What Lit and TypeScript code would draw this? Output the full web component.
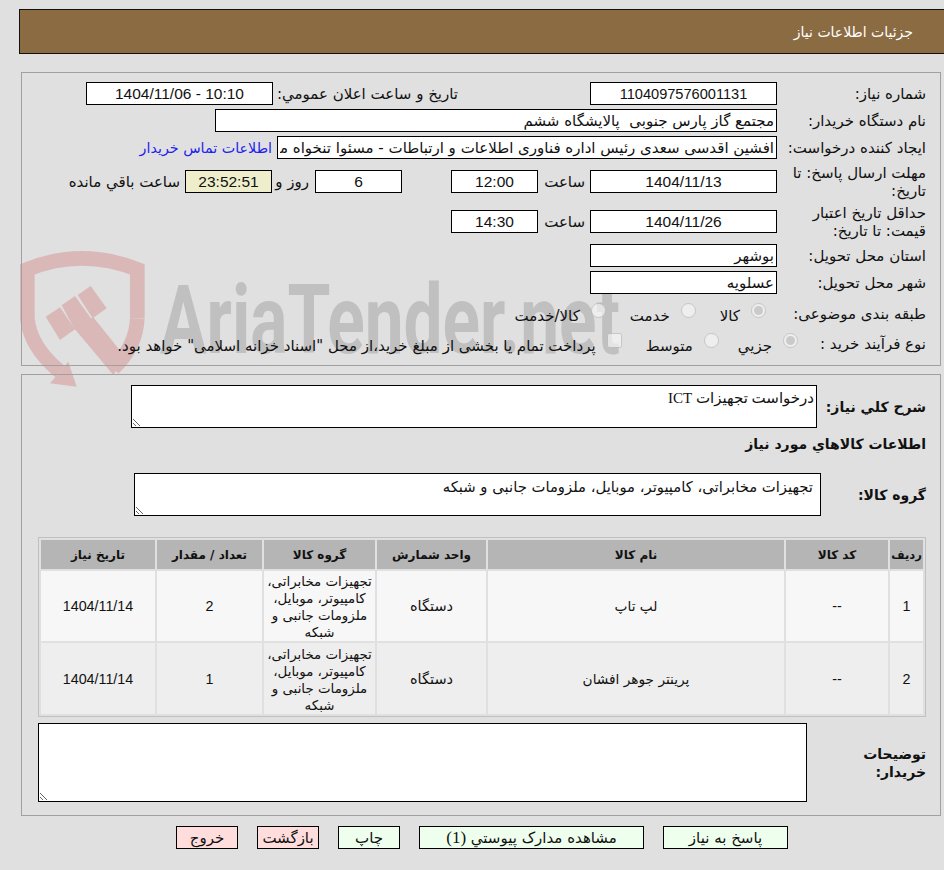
import { LitElement, html, css, svg } from "lit";
import { customElement } from "lit/decorators.js";

const GROUP = "تجهیزات مخابراتی، کامپیوتر، موبایل، ملزومات جانبی و شبکه";

@customElement("app-root")
export class AppRoot extends LitElement {
  static styles = css`
    :host {
      display: block;
      position: relative;
      min-height: 870px;
      overflow: hidden;
      background: #e0e0e0;
      color: #111;
      direction: rtl;
      font-family: "DejaVu Sans", "Noto Sans", sans-serif;
      font-size: 15px;
    }
    .watermark { position: absolute; left: 0; top: 0; width: 944px; height: 870px; }
    .page { position: relative; padding-top: 9px; }
    .header {
      height: 43px;
      margin-left: 19px;
      border: 1px solid #111;
      border-right: none;
      background: #8b6b42;
      color: #fff;
      display: flex;
      align-items: center;
      padding-right: 31px;
      font-size: 14px;
    }
    .panel { margin-left: 21px; margin-right: 3px; border: 1px solid #a0a0a0; }
    .p1 { margin-top: 18px; height: 283px; padding-top: 9px; }
    .p2 { margin-top: 8px; padding-top: 10px; height: 430px; }
    .row { display: flex; align-items: center; height: 23px; margin-top: 4px; }
    .row:first-child { margin-top: 0; }
    .mt11 { margin-top: 11px; }
    .mt17 { margin-top: 17px; }
    .mt8 { margin-top: 8px; }
    .mt7 { margin-top: 7px; }
    .label { width: 144px; margin-left: 5px; margin-right: 14px; flex: none; line-height: 18px; }
    .label.short { width: 128px; margin-left: 0; }
    input.f {
      box-sizing: border-box;
      height: 23px;
      border: 1px solid #000;
      background: #fff;
      color: #111;
      font: inherit;
      padding: 0 2px;
      margin: 0;
      outline: none;
      border-radius: 0;
      flex: none;
    }
    input.c { text-align: center; font-family: "Liberation Sans", sans-serif; font-size: 15.5px; }
    input.id { font-size: 14.6px; }
    input.cd { background: #eeeecc; }
    .w187 { width: 187px; }
    .w87 { width: 87px; }
    .wl { width: 562px; }
    .wc { width: 500px; }
    .t { flex: none; white-space: nowrap; }
    .ml5, input.f.ml5 { margin-right: 5px; }
    .saat { width: 42px; }
    .pub { margin-right: 132px; width: 180px; }
    input.f.six { margin-right: 49px; }
    .rooz { width: 27px; margin-right: 6px; }
    input.f.ml10 { margin-right: 10px; }
    .link { margin-right: 5px; color: #2222ee; text-decoration: none; flex: none; white-space: nowrap; font-size: 14.3px; }
    .radios { display: flex; align-items: center; padding-right: 11px; }
    .radios.r9 { padding-right: 0; }
    .opt { display: flex; align-items: center; gap: 11px; margin-left: 24px; }
    .opt.tight { margin-left: 19px; }
    .opt input { width: 15px; height: 15px; margin: 0; position: relative; top: -3px; }
    .opt span { white-space: nowrap; position: relative; top: 2px; }
    .b { font-weight: 700; font-size: 14px; }
    .sec { display: flex; align-items: center; }
    .ta {
      box-sizing: border-box;
      border: 1px solid #000;
      background: #fff;
      color: #111;
      font: inherit;
      direction: rtl;
      padding: 3px 2px 2px;
      margin: 0;
      outline: none;
      border-radius: 0;
      display: block;
      flex: none;
    }
    .l1 { width: 109px; padding-right: 14px; flex: none; }
    .l1.a { width: 105px; }
    .l1.c { width: 65px; margin-left: 54px; line-height: 18px; }
    .ta1 { width: 686px; height: 43px; font-family: "Liberation Serif", "DejaVu Sans", serif; }
    .ta2 { width: 687px; height: 43px; padding-right: 7px; padding-top: 4px; font-size: 14.8px; }
    .ta3 { width: 769px; height: 79px; }
    .h2 { padding-right: 14px; margin-top: 6px; height: 20px; line-height: 20px; }
    .s2 { margin-top: 19px; }
    table {
      table-layout: fixed;
      width: 888px;
      margin: 21px 14px 6px 0;
      border: 1px solid #c0c0c0;
      border-spacing: 2px;
      border-collapse: separate;
      text-align: center;
    }
    .c33 { width: 33px; }
    .c102 { width: 102px; }
    .c296 { width: 296px; }
    .c109 { width: 109px; }
    .c111 { width: 111px; }
    .c105 { width: 105px; }
    .c114 { width: 114px; }
    th { background: #b5b5b5; height: 29px; padding: 0; font-size: 12px; font-weight: 700; white-space: nowrap; }
    th.first { font-size: 11.5px; }
    td { box-sizing: border-box; padding: 2px 0 0; line-height: 17.3px; font-size: 14.5px; }
    td.n { font-family: "Liberation Sans", sans-serif; font-size: 14.3px; }
    td.m { font-size: 13.7px; }
    td.g { font-size: 13.4px; padding-top: 2px; line-height: 17px; }
    tr.o td { background: #f7f7f7; height: 70px; }
    tr.e td { background: #eeeeee; height: 71px; }
    .bar { display: flex; justify-content: center; gap: 19px; margin: 10px 0 0 20px; }
    button {
      box-sizing: border-box;
      height: 23px;
      border: 1px solid #000;
      background: #eeffee;
      color: #111;
      font: inherit;
      padding: 0;
      border-radius: 0;
      white-space: nowrap;
    }
    button.red { background: #ffdddd; }
    .ser { font-family: "Liberation Serif", serif; font-size: 17px; }
    .w125 { width: 125px; }
    .w225 { width: 225px; }
    .w62 { width: 62px; }
  `;

  private logo() {
    return svg`
      <g transform="translate(10 240) scale(.3333)">
        <g fill="none" stroke="#dab8b8" stroke-width="44">
          <path d="M382 235 L382 88 Q215 22 52 88 L52 235 Q60 320 150 395" />
          <path d="M382 235 Q378 320 310 385" />
        </g>
        <g fill="#dab8b8">
          <path d="M175 365 L200 440 L120 430 Z" />
          <path d="M190 262 L250 232 L345 350 L310 405 Z" />
          <path d="M107 230 L150 202 L195 268 L150 300 Z" />
          <path d="M155 196 L195 168 L245 238 L195 270 Z" />
          <path d="M203 165 L242 138 L290 205 L248 235 Z" />
        </g>
      </g>
      <text x="160" y="353" font-family="Roboto, sans-serif" font-weight="700" font-size="96"
        fill="#c0c0c0" textLength="460" lengthAdjust="spacingAndGlyphs" direction="ltr">AriaTender.net</text>
    `;
  }

  private item(n: number, unit: string, name: string, qty: number, date: string, cls: string) {
    return html`<tr class=${cls}>
      <td class="n">${n}</td><td class="n">--</td><td class="m">${name}</td><td>${unit}</td><td class="g">${GROUP}</td><td class="n">${qty}</td><td class="n">${date}</td>
    </tr>`;
  }

  render() {
    return html`
      <svg class="watermark" viewBox="0 0 944 870">${this.logo()}</svg>
      <div class="page">
        <div class="header">جزئیات اطلاعات نیاز</div>

        <div class="panel p1">
          <div class="row">
            <span class="label">شماره نیاز:</span>
            <input class="f c id w187" readonly .value=${"1104097576001131"} />
            <span class="t pub">تاریخ و ساعت اعلان عمومي:</span>
            <input class="f c w187 ml5" readonly .value=${"10:10 - 1404/11/06"} />
          </div>
          <div class="row">
            <span class="label">نام دستگاه خریدار:</span>
            <input class="f wl" readonly .value=${"مجتمع گاز پارس جنوبی  پالایشگاه ششم"} />
          </div>
          <div class="row">
            <span class="label">ایجاد کننده درخواست:</span>
            <input class="f wc" readonly .value=${"افشین اقدسی سعدی رئیس اداره فناوری اطلاعات و ارتباطات - مسئوا تنخواه مجتمع"} />
            <a class="link" href="#">اطلاعات تماس خریدار</a>
          </div>
          <div class="row mt11">
            <span class="label">مهلت ارسال پاسخ: تا تاریخ:</span>
            <input class="f c w187" readonly .value=${"1404/11/13"} />
            <span class="t ml5 saat">ساعت</span>
            <input class="f c w87 ml5" readonly .value=${"12:00"} />
            <input class="f c w87 six" readonly .value=${"6"} />
            <span class="t rooz">روز و</span>
            <input class="f c w87 cd ml10" readonly .value=${"23:52:51"} />
            <span class="t ml5">ساعت باقي مانده</span>
          </div>
          <div class="row mt17">
            <span class="label">حداقل تاریخ اعتبار قیمت: تا تاریخ:</span>
            <input class="f c w187" readonly .value=${"1404/11/26"} />
            <span class="t ml5 saat">ساعت</span>
            <input class="f c w87 ml5" readonly .value=${"14:30"} />
          </div>
          <div class="row mt11">
            <span class="label">استان محل تحویل:</span>
            <input class="f w187" readonly .value=${"بوشهر"} />
          </div>
          <div class="row">
            <span class="label">شهر محل تحویل:</span>
            <input class="f w187" readonly .value=${"عسلویه"} />
          </div>
          <div class="row mt8">
            <span class="label">طبقه بندی موضوعی:</span>
            <div class="radios">
              <label class="opt"><input type="radio" disabled checked /><span>کالا</span></label>
              <label class="opt"><input type="radio" disabled /><span>خدمت</span></label>
              <label class="opt"><input type="radio" disabled /><span>کالا/خدمت</span></label>
            </div>
          </div>
          <div class="row mt7">
            <span class="label short">نوع فرآیند خرید :</span>
            <div class="radios r9">
              <label class="opt tight"><input type="radio" disabled checked /><span>جزيي</span></label>
              <label class="opt"><input type="radio" disabled /><span>متوسط</span></label>
              <label class="opt"><input type="checkbox" disabled /><span>پرداخت تمام یا بخشی از مبلغ خرید،از محل "اسناد خزانه اسلامی" خواهد بود.</span></label>
            </div>
          </div>
        </div>

        <div class="panel p2">
          <div class="sec">
            <span class="l1 b">شرح کلي نیاز:</span>
            <textarea class="ta ta1" readonly .value=${"درخواست تجهیزات ICT"}></textarea>
          </div>
          <div class="h2 b">اطلاعات کالاهاي مورد نیاز</div>
          <div class="sec s2">
            <span class="l1 a b">گروه کالا:</span>
            <textarea class="ta ta2" readonly .value=${GROUP}></textarea>
          </div>
          <table>
            <colgroup>
              <col class="c33" /><col class="c102" /><col class="c296" />
              <col class="c109" /><col class="c111" /><col class="c105" /><col class="c114" />
            </colgroup>
            <thead>
              <tr>
                <th class="first">ردیف</th><th>کد کالا</th><th>نام کالا</th><th>واحد شمارش</th><th>گروه کالا</th><th>تعداد / مقدار</th><th>تاریخ نیاز</th>
              </tr>
            </thead>
            <tbody>
              ${this.item(1, "دستگاه", "لپ تاپ", 2, "1404/11/14", "o")}
              ${this.item(2, "دستگاه", "پرینتر جوهر افشان", 1, "1404/11/14", "e")}
            </tbody>
          </table>
          <div class="sec">
            <span class="l1 c b">توضیحات خریدار:</span>
            <textarea class="ta ta3" readonly></textarea>
          </div>
        </div>

        <div class="bar">
          <button class="w125">پاسخ به نیاز</button>
          <button class="w225">مشاهده مدارک پیوستي <span class="ser">(1)</span></button>
          <button class="w62">چاپ</button>
          <button class="w62 red">بازگشت</button>
          <button class="w62 red">خروج</button>
        </div>
      </div>
    `;
  }
}
